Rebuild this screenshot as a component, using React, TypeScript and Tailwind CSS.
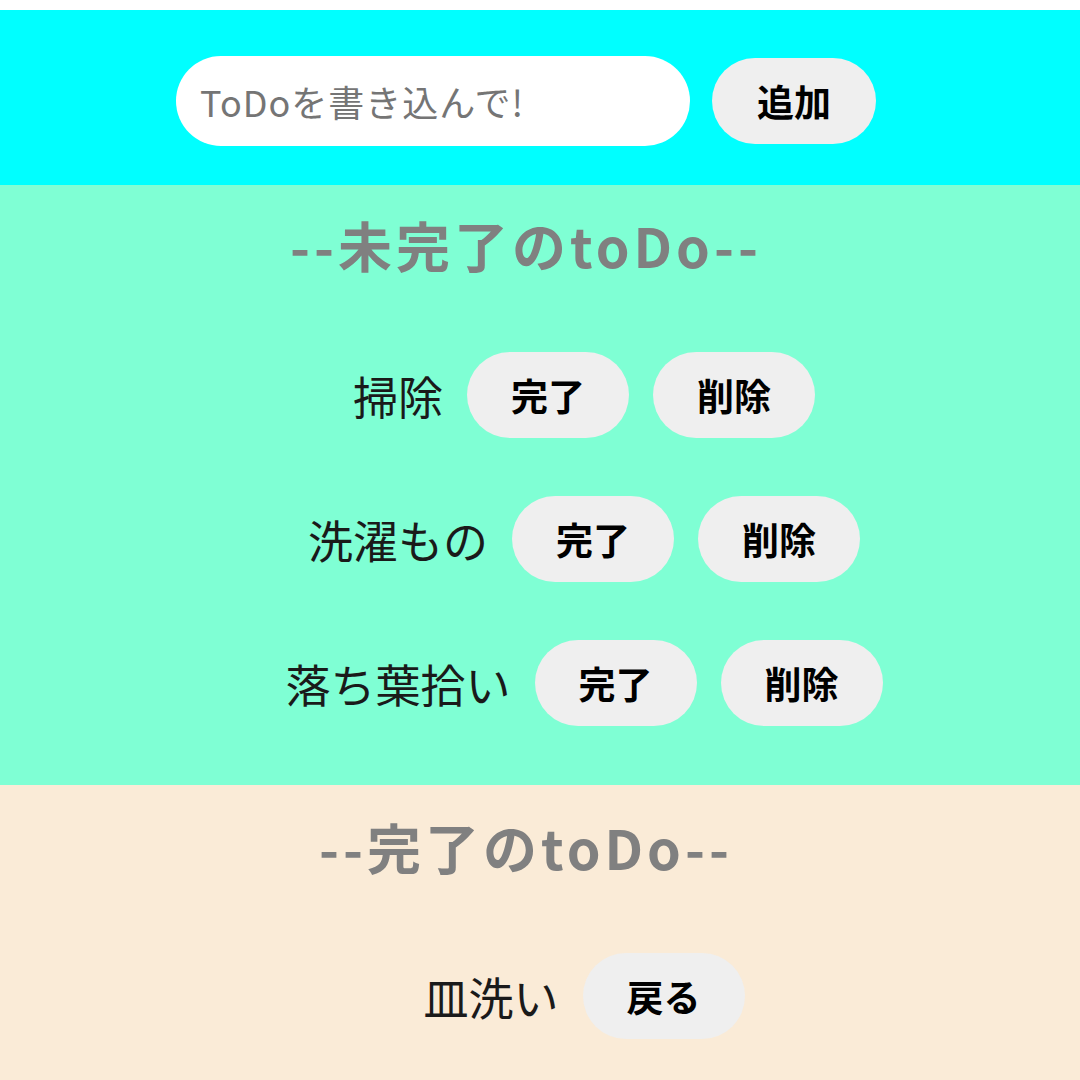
const incomplete = ["掃除", "洗濯もの", "落ち葉拾い"];
const complete = ["皿洗い"];

const font = "font-['Noto_Sans_CJK_JP',sans-serif]";

function Pill({ label }: { label: string }) {
  return (
    <button className="w-[162px] h-[86px] rounded-full bg-[#efefef] text-[37px] font-bold text-black leading-none">
      {label}
    </button>
  );
}

export default function App() {
  return (
    <main className={`min-h-screen bg-white pt-[10px] ${font}`}>
      <section className="bg-[#00ffff] pt-[46px] pb-[39px] pr-[28px] flex items-center justify-center gap-[22px]">
        <input
          className="w-[514px] h-[90px] rounded-full bg-white px-[24px] text-[36px] tracking-[1px] outline-none placeholder:text-[#757575]"
          placeholder="ToDoを書き込んで!"
        />
        <button className="w-[164px] h-[86px] rounded-full bg-[#efefef] text-[37px] font-bold text-black leading-none">
          追加
        </button>
      </section>

      <section className="bg-[#7fffd4] h-[600px] pt-[33px] pr-[28px]">
        <h2 className="text-center text-[54px] leading-[54px] font-bold tracking-[4px] text-[#808080]">--未完了のtoDo--</h2>
        <ul className="pl-[116px] pt-[80px] flex flex-col gap-[58px]">
          {incomplete.map((t) => (
            <li key={t} className="flex items-center justify-center gap-[24px]">
              <span className="text-[45px] text-[#1a1a1a] leading-none">{t}</span>
              <Pill label="完了" />
              <Pill label="削除" />
            </li>
          ))}
        </ul>
      </section>

      <section className="bg-[#faebd7] h-[295px] pt-[35px] pr-[28px]">
        <h2 className="text-center text-[54px] leading-[54px] font-bold tracking-[4px] text-[#808080]">--完了のtoDo--</h2>
        <ul className="pl-[116px] pt-[79px] flex flex-col gap-[58px]">
          {complete.map((t) => (
            <li key={t} className="flex items-center justify-center gap-[24px]">
              <span className="text-[45px] text-[#1a1a1a] leading-none">{t}</span>
              <Pill label="戻る" />
            </li>
          ))}
        </ul>
      </section>
    </main>
  );
}
